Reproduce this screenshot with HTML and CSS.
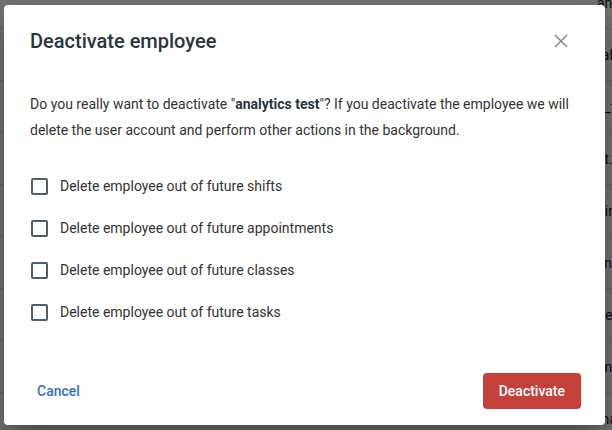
FILE: index.html
```html
<!DOCTYPE html>
<html lang="en">
<head>
<meta charset="utf-8">
<title>Deactivate employee</title>
<link rel="stylesheet" href="styles.css">
</head>
<body>
<div class="page">
  <div class="row"><span class="cell-name"></span><span class="cell-mail">andreas</span></div>
  <div class="row"><span class="cell-name"></span><span class="cell-mail">fabian</span></div>
  <div class="row"><span class="cell-name"></span><span class="cell-mail">a_test</span></div>
  <div class="row"><span class="cell-name"></span><span class="cell-mail">at.test</span></div>
  <div class="row"><span class="cell-name"></span><span class="cell-mail">nina</span></div>
  <div class="row"><span class="cell-name"></span><span class="cell-mail">.info</span></div>
  <div class="row"><span class="cell-name"></span><span class="cell-mail">.test</span></div>
  <div class="row"><span class="cell-name"></span><span class="cell-mail">anna</span></div>
  <div class="row"><span class="cell-name"></span><span class="cell-mail">mark</span></div>
</div>
<div class="backdrop"></div>
<div class="dialog" role="dialog" aria-labelledby="dlg-title">
  <div class="dialog-header">
    <h2 id="dlg-title" class="dialog-title">Deactivate employee</h2>
    <button class="close-btn" aria-label="Close">
      <svg width="14" height="14" viewBox="0 0 14 14"><path d="M1 1 L13 13 M13 1 L1 13" stroke="#8a8a8a" stroke-width="1.6" fill="none"/></svg>
    </button>
  </div>
  <div class="dialog-body">
    <p class="message">Do you really want to deactivate "<b>analytics test</b>"? If you deactivate the employee we will delete the user account and perform other actions in the background.</p>
    <ul class="options">
      <li class="option"><span class="checkbox"></span><span class="option-label">Delete employee out of future shifts</span></li>
      <li class="option"><span class="checkbox"></span><span class="option-label">Delete employee out of future appointments</span></li>
      <li class="option"><span class="checkbox"></span><span class="option-label">Delete employee out of future classes</span></li>
      <li class="option"><span class="checkbox"></span><span class="option-label">Delete employee out of future tasks</span></li>
    </ul>
  </div>
  <div class="dialog-footer">
    <button class="btn-cancel">Cancel</button>
    <button class="btn-danger">Deactivate</button>
  </div>
</div>
</body>
</html>
```

FILE: styles.css
```css
* { box-sizing: border-box; }
html, body { margin: 0; padding: 0; }
body {
  width: 612px;
  height: 430px;
  overflow: hidden;
  background: #ffffff;
  font-family: Roboto, "Liberation Sans", sans-serif;
  position: relative;
}
.page {
  margin-top: -23px;
}
.row {
  display: grid;
  grid-template-columns: 597px 1fr;
  height: 52px;
  align-items: center;
  border-bottom: 1px solid #dcdcdc;
  font-size: 14px;
  color: #1e1e1e;
  white-space: nowrap;
  overflow: hidden;
}
.backdrop {
  position: absolute;
  inset: 0;
  background: rgba(0, 0, 0, 0.54);
}
.dialog {
  position: absolute;
  left: 4px;
  top: 5px;
  width: 601px;
  height: 420px;
  background: #ffffff;
  border-radius: 4px;
  display: flex;
  flex-direction: column;
  box-shadow: 0 11px 15px -7px rgba(0,0,0,.2), 0 24px 38px 3px rgba(0,0,0,.14), 0 9px 46px 8px rgba(0,0,0,.12);
}
.dialog-header {
  display: flex;
  align-items: center;
  justify-content: space-between;
  padding: 24px 32px 0 26px;
}
.dialog-title {
  margin: 0;
  font-size: 20px;
  line-height: 24px;
  font-weight: 500;
  color: #29343d;
}
.close-btn {
  width: 24px;
  height: 24px;
  padding: 0;
  border: 0;
  background: transparent;
  display: flex;
  align-items: center;
  justify-content: center;
}
.dialog-body {
  padding: 38px 26px 0 26px;
}
.message {
  margin: 0 0 22px 0;
  font-size: 14px;
  line-height: 26px;
  color: #333333;
}
.message b { font-weight: 700; color: #29343d; }
.options {
  list-style: none;
  margin: 0;
  padding: 0;
}
.option {
  display: flex;
  align-items: center;
  height: 42px;
  gap: 12px;
  padding-left: 1px;
}
.checkbox {
  width: 17px;
  height: 17px;
  border: 2px solid #4d5f6b;
  border-radius: 2px;
  flex: none;
}
.option-label {
  font-size: 14px;
  color: #333333;
}
.dialog-footer {
  margin-top: auto;
  display: flex;
  align-items: center;
  justify-content: space-between;
  padding: 0 24px 16px 25px;
}
.btn-cancel {
  height: 36px;
  padding: 0 8px;
  border: 0;
  background: transparent;
  font-family: inherit;
  font-size: 14px;
  font-weight: 500;
  color: #3470c0;
}
.btn-danger {
  height: 36px;
  padding: 0 16px;
  border: 0;
  border-radius: 4px;
  background: #c4403a;
  color: #ffffff;
  font-family: inherit;
  font-size: 14px;
  font-weight: 500;
}
```
